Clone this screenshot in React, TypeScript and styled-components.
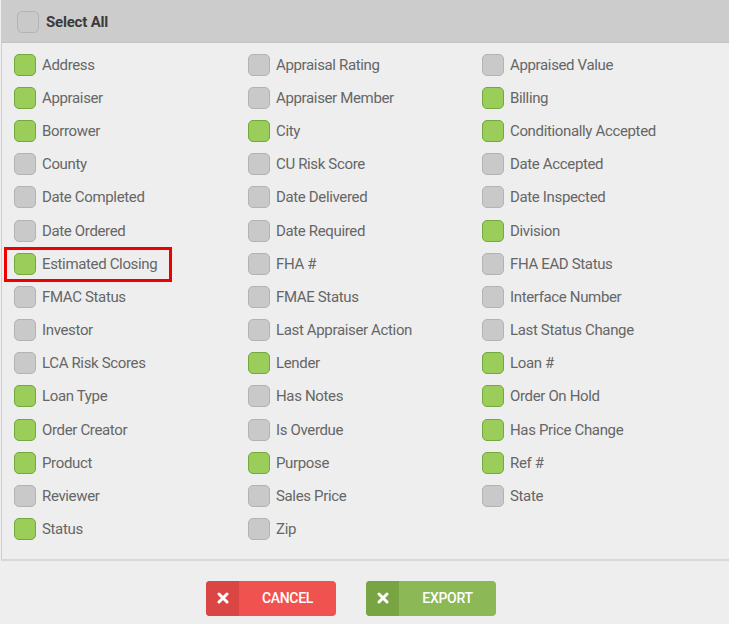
import styled, { createGlobalStyle } from 'styled-components';

const GlobalStyle = createGlobalStyle`
    html, body {
        margin: 0;
        padding: 0;
        background: #eeeeee;
        font-family: Roboto, "Noto Sans", sans-serif;
    }
`;

type Field = {
    readonly label: string
    readonly checked: boolean
    readonly highlighted?: boolean
}

const fields: Field[] = [
    { label: 'Address', checked: true },
    { label: 'Appraisal Rating', checked: false },
    { label: 'Appraised Value', checked: false },
    { label: 'Appraiser', checked: true },
    { label: 'Appraiser Member', checked: false },
    { label: 'Billing', checked: true },
    { label: 'Borrower', checked: true },
    { label: 'City', checked: true },
    { label: 'Conditionally Accepted', checked: true },
    { label: 'County', checked: false },
    { label: 'CU Risk Score', checked: false },
    { label: 'Date Accepted', checked: false },
    { label: 'Date Completed', checked: false },
    { label: 'Date Delivered', checked: false },
    { label: 'Date Inspected', checked: false },
    { label: 'Date Ordered', checked: false },
    { label: 'Date Required', checked: false },
    { label: 'Division', checked: true },
    { label: 'Estimated Closing', checked: true, highlighted: true },
    { label: 'FHA #', checked: false },
    { label: 'FHA EAD Status', checked: false },
    { label: 'FMAC Status', checked: false },
    { label: 'FMAE Status', checked: false },
    { label: 'Interface Number', checked: false },
    { label: 'Investor', checked: false },
    { label: 'Last Appraiser Action', checked: false },
    { label: 'Last Status Change', checked: false },
    { label: 'LCA Risk Scores', checked: false },
    { label: 'Lender', checked: true },
    { label: 'Loan #', checked: true },
    { label: 'Loan Type', checked: true },
    { label: 'Has Notes', checked: false },
    { label: 'Order On Hold', checked: true },
    { label: 'Order Creator', checked: true },
    { label: 'Is Overdue', checked: false },
    { label: 'Has Price Change', checked: true },
    { label: 'Product', checked: true },
    { label: 'Purpose', checked: true },
    { label: 'Ref #', checked: true },
    { label: 'Reviewer', checked: false },
    { label: 'Sales Price', checked: false },
    { label: 'State', checked: false },
    { label: 'Status', checked: true },
    { label: 'Zip', checked: false },
];

const Panel = styled.div`
    margin-left: 1px;
    margin-right: -20px;
    border-left: 1px solid #cfcfcf;
    border-bottom: 2px solid #d8d8d8;
`;

const Header = styled.div`
    height: 43px;
    background: #cccccc;
    display: flex;
    align-items: center;
    gap: 7px;
    padding: 2px 0 0 15px;
    border-bottom: 1px solid #c4c4c4;
    box-sizing: border-box;
`;

const HeaderLabel = styled.span`
    font-size: 15px;
    font-weight: 700;
    color: #3a3a3a;
    letter-spacing: -0.2px;
`;

const Grid = styled.div`
    display: grid;
    grid-template-columns: repeat(3, 234px);
    grid-auto-rows: 33.2px;
    padding: 5px 0 13px 12px;
`;

const Item = styled.label<{ $highlighted?: boolean }>`
    position: relative;
    display: flex;
    align-items: center;
    gap: 6px;
    font-size: 15px;
    color: #666666;
    letter-spacing: -0.35px;
    cursor: pointer;

    ${({ $highlighted }) => $highlighted && `
        &::after {
            content: '';
            position: absolute;
            left: -10px;
            top: -0.5px;
            width: 168px;
            height: 35px;
            box-sizing: border-box;
            border: 3px solid #ee0000;
        }
    `}
`;

const Box = styled.span<{ $checked: boolean }>`
    width: 20px;
    height: 20px;
    flex: none;
    border-radius: 5px;
    background: ${({ $checked }) => ($checked ? '#9acd5a' : '#c9c9c9')};
    border: 1px solid ${({ $checked }) => ($checked ? '#74a83c' : '#b3b3b3')};
`;

const Footer = styled.div`
    display: flex;
    gap: 30px;
    padding: 20px 0 0 206px;
`;

const Button = styled.button<{ $main: string }>`
    display: flex;
    width: 130px;
    height: 35px;
    padding: 0;
    border: none;
    border-radius: 4px;
    overflow: hidden;
    background: ${({ $main }) => $main};
    color: #ffffff;
    font-family: Roboto, sans-serif;
    font-size: 14px;
    font-weight: 500;
    letter-spacing: -0.3px;
    cursor: pointer;
`;

const ButtonIcon = styled.span<{ $dark: string }>`
    width: 33px;
    height: 100%;
    display: flex;
    align-items: center;
    justify-content: center;
    background: ${({ $dark }) => $dark};
`;

const ButtonText = styled.span`
    flex: 1;
    display: flex;
    align-items: center;
    justify-content: center;
`;

const Cross = () => (
    <svg width="12" height="12" viewBox="0 0 12 12">
        <path d="M2 2 L10 10 M10 2 L2 10" stroke="#fff" strokeWidth="3" strokeLinecap="round" />
    </svg>
);

export default function App() {
    return (
        <>
            <GlobalStyle />
            <Panel>
                <Header>
                    <Box $checked={false} />
                    <HeaderLabel>Select All</HeaderLabel>
                </Header>
                <Grid>
                    {fields.map(f => (
                        <Item key={f.label} $highlighted={f.highlighted}>
                            <Box $checked={f.checked} />
                            {f.label}
                        </Item>
                    ))}
                </Grid>
            </Panel>
            <Footer>
                <Button $main="#f0524f">
                    <ButtonIcon $dark="#d94644"><Cross /></ButtonIcon>
                    <ButtonText>CANCEL</ButtonText>
                </Button>
                <Button $main="#8cb855">
                    <ButtonIcon $dark="#78a443"><Cross /></ButtonIcon>
                    <ButtonText>EXPORT</ButtonText>
                </Button>
            </Footer>
        </>
    );
}
